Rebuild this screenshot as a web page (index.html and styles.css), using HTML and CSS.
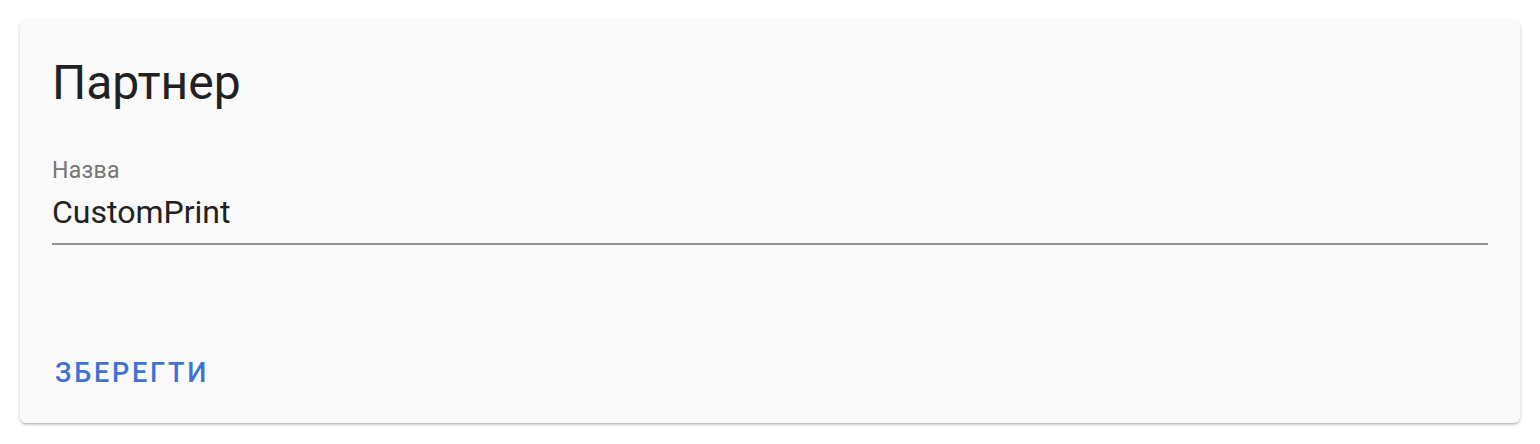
FILE: index.html
```html
<!DOCTYPE html>
<html>
<head>
  <meta charset="utf-8">
  <title>Партнер</title>
  <link rel="stylesheet" href="styles.css">
</head>
<body>
  <div class="card">
    <h1 class="card-title">Партнер</h1>

    <label class="field">
      <span class="field-label">Назва</span>
      <input type="text" class="field-input" value="CustomPrint">
    </label>

    <div class="actions">
      <button class="button">Зберегти</button>
    </div>
  </div>
</body>
</html>
```

FILE: styles.css
```css
body {
  font-family: Roboto, "Liberation Sans", Arial, sans-serif;
  background-color: #ffffff;
  margin: 0;
  padding: 20px;
}

.card {
  background-color: #fafafa;
  border-radius: 6px;
  padding: 35px 32px 0 32px;
  height: 368px;
  box-shadow: 0 2px 3px -1px rgba(0, 0, 0, 0.3), 0 1px 4px rgba(0, 0, 0, 0.12);
  display: flex;
  flex-direction: column;
}

.card-title {
  margin: 0;
  font-size: 48px;
  font-weight: 400;
  line-height: 56px;
  color: #212121;
}

.field {
  display: flex;
  flex-direction: column;
  margin-top: 48px;
}

.field-label {
  font-size: 23px;
  line-height: 24px;
  letter-spacing: 0.3px;
  color: #757575;
}

.field-input {
  font-family: inherit;
  font-size: 32px;
  line-height: 36px;
  color: #212121;
  background: transparent;
  border: none;
  border-bottom: 2px solid #949494;
  padding: 0 0 13px 0;
  margin-top: 11px;
  outline: none;
}

.actions {
  margin-top: auto;
  padding-bottom: 34px;
}

.button {
  font-family: inherit;
  font-size: 27px;
  font-weight: 500;
  letter-spacing: 2.8px;
  text-transform: uppercase;
  color: #3f72d2;
  background: none;
  border: none;
  padding: 0 3px;
  line-height: 32px;
  cursor: pointer;
}
```
